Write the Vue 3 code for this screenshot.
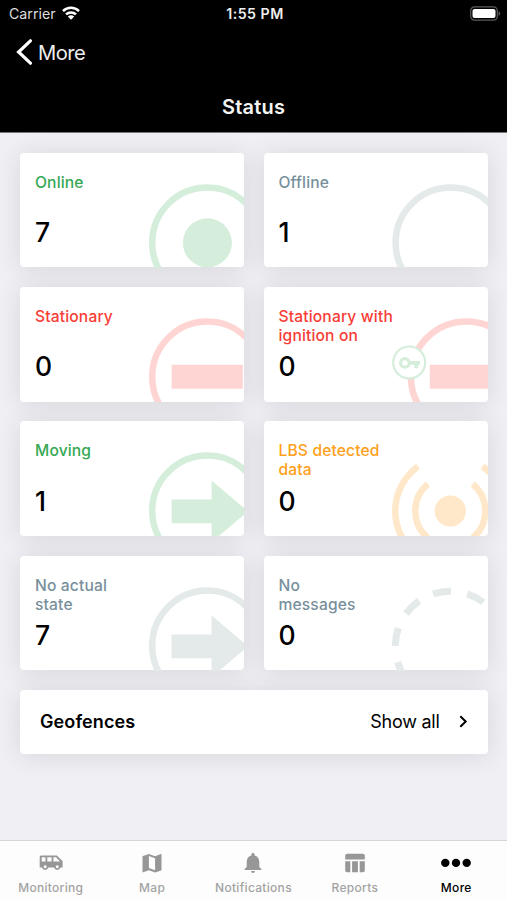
<script setup>
const cards = [
  { label: ['Online'], value: 7, tone: 'green', art: 'dot' },
  { label: ['Offline'], value: 1, tone: 'slate', art: 'ring' },
  { label: ['Stationary'], value: 0, tone: 'red', art: 'bar' },
  { label: ['Stationary with', 'ignition on'], value: 0, tone: 'red', art: 'ignition' },
  { label: ['Moving'], value: 1, tone: 'green', art: 'arrow' },
  { label: ['LBS detected', 'data'], value: 0, tone: 'orange', art: 'signal' },
  { label: ['No actual', 'state'], value: 7, tone: 'slate', art: 'arrow' },
  { label: ['No', 'messages'], value: 0, tone: 'slate', art: 'dashed' },
]
const tabs = ['Monitoring', 'Map', 'Notifications', 'Reports', 'More']
</script>

<template>
  <div class="screen">
    <header class="header">
      <div class="statusbar">
        <div class="carrier">
          <span>Carrier</span>
          <svg width="18" height="14" viewBox="0 0 18 14" fill="none" stroke="#fff" stroke-width="2.5">
            <path d="M1 5.2C5.4.7 12.6.7 17 5.2" />
            <path d="M4 8.4c2.8-2.7 7.2-2.7 10 0" />
            <path d="M9 13.8 5.8 10.6c1.8-1.7 4.6-1.7 6.4 0z" fill="#fff" stroke="none" />
          </svg>
        </div>
        <span class="time">1:55 PM</span>
        <div class="battery">
          <svg width="31" height="15" viewBox="0 0 31 15">
            <rect x=".7" y=".9" width="26.6" height="13.2" rx="3.8" fill="none" stroke="#5c5c5e" stroke-width="1.2" />
            <rect x="2.5" y="2.9" width="23" height="9.2" rx="2" fill="#fff" />
            <path d="M28.6 5.2v4.6c2-.8 2-3.8 0-4.6z" fill="#5c5c5e" />
          </svg>
        </div>
      </div>
      <div class="back">
        <svg width="16" height="26" viewBox="0 0 16 26" fill="none" stroke="#fff" stroke-width="3.2">
          <path d="M14.4 1.8 2.6 13l11.8 11.2" stroke-linecap="round" />
        </svg>
        <span>More</span>
      </div>
      <h1>Status</h1>
    </header>

    <main class="content">
      <div class="grid">
        <section v-for="c in cards" :key="c.label.join(' ')" class="card" :class="c.tone">
          <svg class="art" viewBox="0 0 224 115" fill="none" stroke-width="6.5">
            <g v-if="c.art === 'ignition'">
              <circle cx="202.3" cy="89.8" r="55.4" stroke="currentColor" />
              <path d="M165.8 77.8h58.2v24h-58.2z" fill="currentColor" />
              <g class="key">
                <circle cx="145.2" cy="75.5" r="16" fill="#fff" stroke="currentColor" stroke-width="2.2" />
                <circle cx="140.9" cy="75.9" r="4.3" stroke="currentColor" stroke-width="3.2" />
                <path d="M145 74.1h11v3.6h-1.9v3.5h-3.8v-3.5H145z" fill="currentColor" />
              </g>
            </g>
            <g v-else-if="c.art === 'signal'">
              <circle cx="186.3" cy="90" r="15.6" fill="currentColor" />
              <path d="M154.1 45.4a55 55 0 0 0 0 89.2M218.5 45.4a55 55 0 0 1 0 89.2M163.9 63.1a35 35 0 0 0 0 53.8M208.7 63.1a35 35 0 0 1 0 53.8" stroke="currentColor" />
            </g>
            <circle
              v-else-if="c.art === 'dashed'" cx="186.3" cy="90.2" r="55" stroke="currentColor" stroke-width="7"
              stroke-dasharray="18.3 16.26" transform="rotate(-108.3 186.3 90.2)"
            />
            <g v-else>
              <circle :cx="c.art === 'ring' ? 186.8 : 187.4" cy="89.8" r="55.2" stroke="currentColor" />
              <circle v-if="c.art === 'dot'" cx="187.4" cy="89.8" r="24.5" fill="currentColor" />
              <path v-if="c.art === 'bar'" d="M151.6 77.8h71.2v24h-71.2z" fill="currentColor" />
              <path v-if="c.art === 'arrow'" d="M151.6 78.4h40V59.5L228 90.3l-36.4 30.8v-18.8h-40z" fill="currentColor" />
            </g>
          </svg>
          <div class="label"><div v-for="line in c.label" :key="line">{{ line }}</div></div>
          <div class="value">{{ c.value }}</div>
        </section>
      </div>
      <section class="geofences">
        <strong>Geofences</strong>
        <span class="all">Show all</span>
        <svg width="9" height="13" viewBox="0 0 9 13" fill="none" stroke="#000" stroke-width="2">
          <path d="m1.3 1.2 5.4 5.3-5.4 5.3" />
        </svg>
      </section>
    </main>

    <nav class="tabs">
      <div v-for="(t, i) in tabs" :key="t" class="tab" :class="{ active: t === 'More' }">
        <svg width="32" height="24" viewBox="0 0 32 24" fill="currentColor">
          <path
            v-if="i === 0" fill-rule="evenodd"
            d="M6.4 4.5h15.4l5.8 5.6v6.5h-2.1a3.4 3.4 0 0 1-6.5 0h-5.6a3.4 3.4 0 0 1-6.5 0H4.7V6.2c0-1 .7-1.7 1.7-1.7zM6.7 6.3v4.2h3.8V6.3zM12.3 6.3v4.2h4.3V6.3zM18.4 6.3v4.2h6.7l-4.1-4.2zM10.1 14.2a1.5 1.5 0 1 0 .1 0zM22.2 14.2a1.5 1.5 0 1 0 .1 0z"
          />
          <path
            v-else-if="i === 1" fill-rule="evenodd"
            d="m25 3-.2.1-5.7 2.1-6.2-2.2-6 2c-.3.1-.4.3-.4.5v15.4c0 .3.2.5.5.5l.2-.1 5.7-2.1 6.2 2.2 6-2c.2-.1.4-.3.4-.5V3.5c0-.3-.2-.5-.5-.5zM19.1 19.3l-6.2-2.2V5l6.2 2.2z"
          />
          <path
            v-else-if="i === 2"
            d="M16 22c1.1 0 2-.9 2-2h-4c0 1.1.9 2 2 2zm6.3-6v-5.2c0-3.2-1.8-5.7-4.7-6.4v-.7c0-.9-.7-1.6-1.6-1.6s-1.6.7-1.6 1.6v.7c-3 .7-4.7 3.2-4.7 6.4V16l-2.1 2.1V19h16.8v-.9z"
          />
          <path
            v-else-if="i === 3"
            d="M8.2 2.8h15.6c1.1 0 2 .9 2 2v3.7H6.2V4.8c0-1.1.9-2 2-2zM6.2 10.3h5.1v11H8.2c-1.1 0-2-.9-2-2zM13.1 10.3h5.8v11h-5.8zM20.7 10.3h5.1v9c0 1.1-.9 2-2 2h-3.1z"
          />
          <g v-else>
            <circle cx="5.3" cy="11.9" r="4.2" /><circle cx="16" cy="11.9" r="4.2" /><circle cx="26.7" cy="11.9" r="4.2" />
          </g>
        </svg>
        <span>{{ t }}</span>
      </div>
    </nav>
  </div>
</template>

<style>
body { margin: 0; }
</style>

<style scoped>
.screen {
  width: 507px; height: 900px; display: flex; flex-direction: column;
  background: #efeff4; color: #000; overflow: hidden;
  font-family: Inter, "Liberation Sans", sans-serif;
}
.header { height: 133px; flex: none; box-sizing: border-box; background: #000; color: #fff; border-bottom: 1px solid #777; }
.statusbar {
  height: 27px; padding: 0 6px 0 9px; display: grid; grid-template-columns: 1fr auto 1fr; align-items: center;
}
.carrier { display: flex; align-items: center; gap: 6px; font-size: 14.2px; color: #ddd; }
.carrier svg { margin-top: -1px; }
.time { font-size: 14.2px; font-weight: 600; letter-spacing: .5px; color: #eee; }
.battery { display: flex; justify-content: flex-end; }
.back { height: 50px; display: flex; align-items: center; gap: 6px; padding-left: 16px; font-size: 20.2px; color: #eee; letter-spacing: -.5px; }
h1 { margin: 17px 0 0; font-size: 20px; line-height: 27px; font-weight: 600; letter-spacing: .2px; text-align: center; color: #f4f4f4; }
.content { flex: 1; padding: 19.5px 19.5px 0 20px; }
.grid { display: grid; grid-template-columns: 1fr 1fr; gap: 19.6px 19.5px; }
.card {
  position: relative; height: 114.8px; box-sizing: border-box; padding: 20px 15px 0;
  border-radius: 4px; background: #fff; box-shadow: 0 2px 24px rgba(40, 40, 50, .12);
}
.art { position: absolute; top: 0; left: 0; width: 224px; height: 115px; border-radius: 4px; }
.label { position: relative; height: 43.5px; font-size: 15.6px; line-height: 19px; font-weight: 500; letter-spacing: .15px; }
.value { position: relative; font-size: 26.5px; line-height: 32px; font-weight: 450; }
.green .label { color: #34a853; }
.slate .label { color: #78909c; }
.red .label { color: #f83d36; }
.orange .label { color: #ff9f1c; }
.green .art, .key { color: #d5eedb; }
.slate .art { color: #e4e9e9; }
.red .art { color: #ffd5d4; }
.orange .art { color: #ffe8c9; }
.geofences {
  margin-top: 19.6px; height: 63.5px; box-sizing: border-box; padding: 0 20px; display: flex; align-items: center;
  border-radius: 4px; background: #fff; font-size: 18px; box-shadow: 0 2px 24px rgba(40, 40, 50, .12);
}
.geofences strong { flex: 1; font-weight: 600; letter-spacing: .1px; }
.all { margin-right: 19px; letter-spacing: -.25px; }
.tabs {
  height: 60px; flex: none; box-sizing: border-box; display: grid; grid-template-columns: repeat(5, 1fr);
  padding-top: 10px; background: #fdfdfd; border-top: 1px solid #d5d5d9;
}
.tab { display: flex; flex-direction: column; align-items: center; color: #979797; font-size: 12px; line-height: 16px; letter-spacing: .3px; font-weight: 500; }
.tab span { margin-top: 5px; color: #a3a3a3; }
.tab.active, .tab.active span { color: #000; }
</style>
